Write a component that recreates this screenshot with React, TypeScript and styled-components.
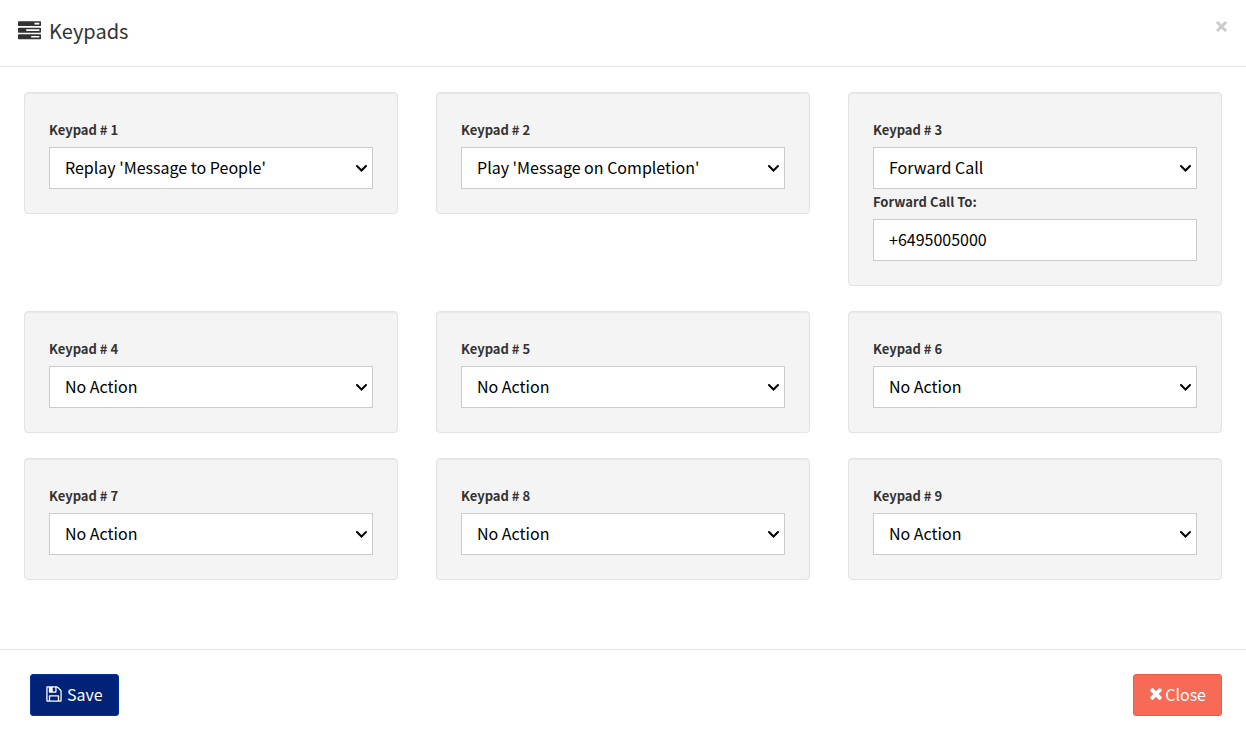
import React, { useState } from 'react';
import styled, { createGlobalStyle } from 'styled-components';

const GlobalStyle = createGlobalStyle`
  *, *::before, *::after { box-sizing: border-box; }
  body {
    margin: 0;
    background: #fff;
    color: #333;
    font-family: "Source Sans Pro", "Noto Sans CJK SC", "Open Sans", sans-serif;
    font-size: 16px;
    line-height: 24px;
  }
  button, input, select { font: inherit; }
`;

const Dialog = styled.form`
  display: flex;
  flex-direction: column;
  min-height: 100vh;
`;

const Header = styled.header`
  display: flex;
  align-items: flex-start;
  justify-content: space-between;
  padding: 13px 18px 17px;
  border-bottom: 1px solid #e5e5e5;
`;

const Title = styled.h4`
  display: flex;
  align-items: center;
  gap: 8px;
  margin: 0;
  font-size: 20px;
  font-weight: 400;
  line-height: 36px;
`;

const DismissButton = styled.button`
  display: flex;
  padding: 7px 0;
  border: 0;
  background: none;
  color: #ccc;
  cursor: pointer;
`;

const Body = styled.main`
  display: grid;
  flex: 1;
  grid-template-columns: repeat(3, minmax(0, 1fr));
  align-content: start;
  align-items: start;
  gap: 25px 38px;
  padding: 25px 24px 69px;
`;

const Well = styled.section`
  display: flex;
  flex-direction: column;
  padding: 24px;
  border: 1px solid #e3e3e3;
  border-radius: 4px;
  background: #f4f4f4;
  box-shadow: inset 0 1px 1px rgba(0, 0, 0, 0.05);
`;

const FieldLabel = styled.label`
  margin-bottom: 4px;
  font-size: 13px;
  font-weight: 700;
  line-height: 26px;
`;

const SelectBox = styled.div`
  position: relative;
  display: flex;
`;

const Select = styled.select`
  appearance: none;
  width: 100%;
  height: 42px;
  padding: 6px 30px 8px 15px;
  border: 1px solid #ccc;
  border-radius: 0;
  background: #fff;
  color: #000;
`;

const Chevron = styled.svg`
  position: absolute;
  top: 17px;
  right: 6px;
  fill: none;
  stroke: #000;
  stroke-width: 2;
  stroke-linecap: round;
  pointer-events: none;
`;

const TextInput = styled.input`
  width: 100%;
  height: 42px;
  padding: 6px 15px 8px;
  border: 1px solid #ccc;
  border-radius: 0;
  background: #fff;
  color: #000;
`;

const Footer = styled.footer`
  display: flex;
  justify-content: space-between;
  padding: 24px 24px 22px 30px;
  border-top: 1px solid #e5e5e5;
`;

const Button = styled.button<{ $tone: 'primary' | 'danger' }>`
  display: inline-flex;
  align-items: center;
  justify-content: center;
  gap: ${({ $tone }) => ($tone === 'primary' ? '5px' : '2px')};
  height: 42px;
  padding: 0 15px 2px;
  border: 1px solid ${({ $tone }) => ($tone === 'primary' ? '#0033a0' : '#eb5a43')};
  border-radius: 3px;
  background: ${({ $tone }) => ($tone === 'primary' ? '#002277' : '#f66a56')};
  color: #fff;
  cursor: pointer;
`;

const Glyph = styled.svg`
  flex: none;
  fill: currentColor;
`;

const TasksIcon = () => (
  <Glyph width="23" height="24" viewBox="0 0 1792 1792" aria-hidden="true">
    <path d="M1024 1408h640v-128h-640v128zm-384-512h1024V768H640v128zm640-512h384V256h-384v128zm512 832v256q0 26-19 45t-45 19H64q-26 0-45-19t-19-45v-256q0-26 19-45t45-19h1664q26 0 45 19t19 45zm0-512v256q0 26-19 45t-45 19H64q-26 0-45-19T0 960V704q0-26 19-45t45-19h1664q26 0 45 19t19 45zm0-512v256q0 26-19 45t-45 19H64q-26 0-45-19T0 448V192q0-26 19-45t45-19h1664q26 0 45 19t19 45z" />
  </Glyph>
);

const SaveIcon = () => (
  <Glyph width="16" height="18" viewBox="0 0 1536 1792" aria-hidden="true">
    <path d="M384 1536h768v-384H384v384zm896 0h128V640q0-14-10-38.5t-20-34.5l-281-281q-10-10-34-20t-39-10v416q0 40-28 68t-68 28H352q-40 0-68-28t-28-68V256H128v1280h128v-416q0-40 28-68t68-28h832q40 0 68 28t28 68v416zM896 608V288q0-13-9.5-22.500T864 256H672q-13 0-22.500 9.500T640 288v320q0 13 9.500 22.500T672 640h192q13 0 22.500-9.500T896 608zm640 32v928q0 40-28 68t-68 28H96q-40 0-68-28t-28-68V224q0-40 28-68t68-28h928q40 0 88 20t76 48l280 280q28 28 48 76t20 88z" />
  </Glyph>
);

const TimesIcon = () => (
  <Glyph width="14" height="18" viewBox="0 64 1408 1792" aria-hidden="true">
    <path d="M1298 1322q0 40-28 68l-136 136q-28 28-68 28t-68-28l-294-294-294 294q-28 28-68 28t-68-28L138 1390q-28-28-28-68t28-68l294-294-294-294q-28-28-28-68t28-68l136-136q28-28 68-28t68 28l294 294 294-294q28-28 68-28t68 28l136 136q28 28 28 68t-28 68L976 960l294 294q28 28 28 68z" />
  </Glyph>
);

const DismissIcon = () => (
  <Glyph width="13" height="13" viewBox="0 0 13 13" aria-hidden="true">
    <path d="M2 2L11 11M11 2L2 11" stroke="currentColor" strokeWidth="3" />
  </Glyph>
);

const ChevronIcon = () => (
  <Chevron width="12" height="9" viewBox="0 0 12 9" aria-hidden="true">
    <path d="M2 2L6.500 6.500L11 2" />
  </Chevron>
);

const ACTIONS = [
  'No Action',
  "Replay 'Message to People'",
  "Play 'Message on Completion'",
  'Forward Call',
];

const Keypad = ({ number, initial }: { number: number; initial: string }) => {
  const [action, setAction] = useState(initial);
  const [target, setTarget] = useState('+6495005000');

  return (
    <Well>
      <FieldLabel htmlFor={`keypad-${number}`}>Keypad # {number}</FieldLabel>
      <SelectBox>
        <Select id={`keypad-${number}`} value={action} onChange={(e) => setAction(e.target.value)}>
          {ACTIONS.map((name) => (
            <option key={name}>{name}</option>
          ))}
        </Select>
        <ChevronIcon />
      </SelectBox>
      {action === 'Forward Call' && (
        <>
          <FieldLabel htmlFor={`forward-${number}`}>Forward Call To:</FieldLabel>
          <TextInput
            id={`forward-${number}`}
            type="tel"
            value={target}
            onChange={(e) => setTarget(e.target.value)}
          />
        </>
      )}
    </Well>
  );
};

const INITIAL_ACTIONS = [
  ACTIONS[1],
  ACTIONS[2],
  ACTIONS[3],
  ...Array<string>(6).fill(ACTIONS[0]),
];

export default function App() {
  return (
    <>
      <GlobalStyle />
      <Dialog onSubmit={(e) => e.preventDefault()}>
        <Header>
          <Title>
            <TasksIcon />
            Keypads
          </Title>
          <DismissButton type="button" aria-label="Close">
            <DismissIcon />
          </DismissButton>
        </Header>
        <Body>
          {INITIAL_ACTIONS.map((action, index) => (
            <Keypad key={index} number={index + 1} initial={action} />
          ))}
        </Body>
        <Footer>
          <Button type="submit" $tone="primary">
            <SaveIcon />
            Save
          </Button>
          <Button type="button" $tone="danger">
            <TimesIcon />
            Close
          </Button>
        </Footer>
      </Dialog>
    </>
  );
}
